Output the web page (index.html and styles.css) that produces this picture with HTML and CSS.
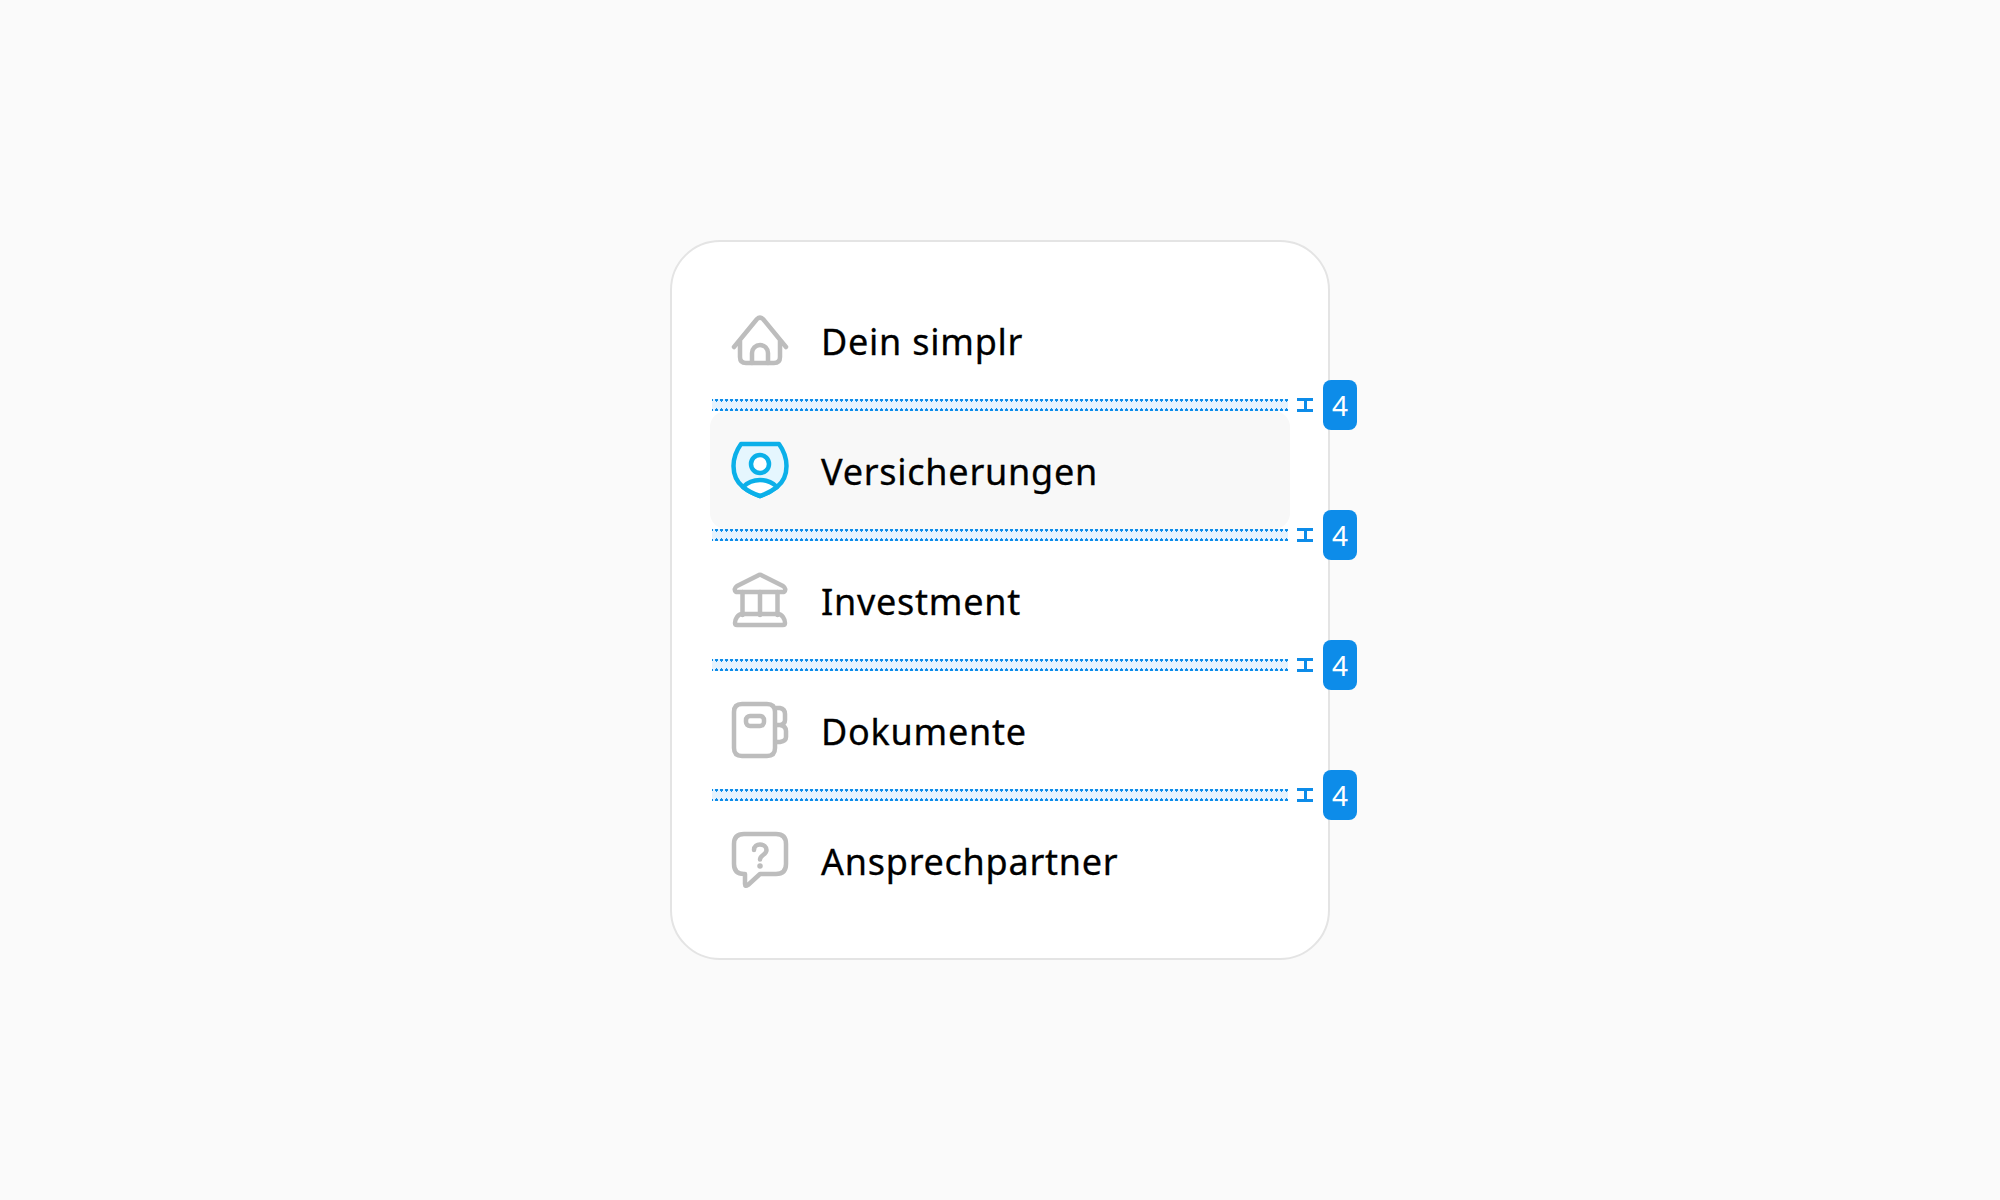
FILE: index.html
```html
<!DOCTYPE html>
<html lang="de">
<head>
    <meta charset="UTF-8">
    <title>Navigation Abstände</title>
    <link rel="stylesheet" href="styles.css">
</head>
<body>

    <div class="card">
        <div class="nav-item">
            <svg class="icon" viewBox="0 0 60 60">
                <path d="M4 37 L27 9 Q30 6 33 9 L56 37"/>
                <path d="M10 31 V47 Q10 53 16 53 H44 Q50 53 50 47 V31"/>
                <path d="M22 53 V43 A8 8 0 0 1 38 43 V53"/>
            </svg>
            <span class="label">Dein simplr</span>
        </div>

        <div class="gap"><span class="gap-mark"></span><span class="badge">4</span></div>

        <div class="nav-item active">
            <svg class="icon" viewBox="0 0 60 60">
                <path class="shield" d="M11 4 H49 C54 11 56.5 19 56.5 26 C56.5 36 52 43 47 47 C42 51 36 54 30 56 C24 54 18 51 13 47 C8 43 3.5 36 3.5 26 C3.5 19 6 11 11 4 Z"/>
                <path class="cutout" d="M13 47 C18 42 24 40 30 40 C36 40 42 42 47 47 C42 51 36 54 30 56 C24 54 18 51 13 47 Z"/>
                <circle class="cutout" cx="30" cy="24" r="9"/>
            </svg>
            <span class="label">Versicherungen</span>
        </div>

        <div class="gap"><span class="gap-mark"></span><span class="badge">4</span></div>

        <div class="nav-item">
            <svg class="icon" viewBox="0 0 60 60">
                <path d="M28 5.5 Q30 4 32 5.5 L53 16 Q57 19 54 22 H6 Q3 19 7 16 Z"/>
                <path d="M12.5 22 V45 M30 22 V45 M47.5 22 V45"/>
                <path d="M12 44 H48 C52 44 55 49 55 53 Q55 55 53 55 H7 Q5 55 5 53 C5 49 8 44 12 44 Z"/>
            </svg>
            <span class="label">Investment</span>
        </div>

        <div class="gap"><span class="gap-mark"></span><span class="badge">4</span></div>

        <div class="nav-item">
            <svg class="icon" viewBox="0 0 60 60">
                <path d="M12 4 H37 Q45 4 45 12 V48 Q45 56 37 56 H12 Q4 56 4 48 V12 Q4 4 12 4 Z"/>
                <rect x="16" y="16" width="18" height="10" rx="4"/>
                <path d="M46 8 H50 Q55 9 55 14 V20 Q55 24 50 25 H46 M50 25 Q56 26 56 31 V37 Q56 41 50 42 H46"/>
            </svg>
            <span class="label">Dokumente</span>
        </div>

        <div class="gap"><span class="gap-mark"></span><span class="badge">4</span></div>

        <div class="nav-item">
            <svg class="icon" viewBox="0 0 60 60">
                <path d="M14 4 H46 Q56 4 56 14 V34 Q56 44 46 44 H30 L18 55 Q15 57 15 54 V44 H14 Q4 44 4 34 V14 Q4 4 14 4 Z"/>
                <path d="M24 20 C24 16 27 14.5 30 14.5 C34 14.5 36.5 17 36.5 20 C36.5 25 30 25 30 29.5"/>
                <path class="dot" d="M30 36 V36.1"/>
            </svg>
            <span class="label">Ansprechpartner</span>
        </div>
    </div>

</body>
</html>
```

FILE: styles.css
```css
body {
    background-color: #fafafa;
    margin: 0;
    height: 1200px;
    display: flex;
    justify-content: center;
    align-items: center;
    font-family: "Noto Sans", sans-serif;
}

.card {
    box-sizing: border-box;
    width: 660px;
    height: 720px;
    background-color: #ffffff;
    border: 2px solid #e4e4e4;
    border-radius: 50px;
    padding: 39px 38px;
}

.nav-item {
    height: 118px;
    display: flex;
    align-items: center;
    gap: 31px;
    padding-left: 20px;
    border-radius: 16px;
    box-sizing: border-box;
}

.nav-item.active {
    background-color: #f8f8f8;
}

.icon {
    width: 60px;
    height: 60px;
    flex-shrink: 0;
    fill: none;
    stroke: #bdbdbd;
    stroke-width: 4.5;
    stroke-linecap: round;
    stroke-linejoin: round;
}

.active .icon {
    stroke: #0bb0e9;
}

.shield {
    fill: #e5f6fe;
}

.cutout {
    fill: #ffffff;
}

.dot {
    stroke-width: 5.5;
}

.label {
    font-size: 36px;
    letter-spacing: 0.75px;
    padding-top: 2px;
    color: #000000;
    -webkit-text-stroke: 0.3px #000000;
}

/* Abstand zwischen den Zeilen */
.gap {
    height: 12px;
    position: relative;
    background-color: #e6f3fe;
    background-image:
        radial-gradient(circle, #0d8ce9 1.5px, transparent 1.8px),
        radial-gradient(circle, #0d8ce9 1.5px, transparent 1.8px);
    background-size: 5px 4px;
    background-repeat: repeat-x;
    background-position: 2px -1px, 2px 9px;
    margin: 0 2px;
}

.gap-mark {
    position: absolute;
    left: 585px;
    top: -1px;
    width: 16px;
    height: 14px;
    box-sizing: border-box;
    border-top: 3px solid #0d8ce9;
    border-bottom: 3px solid #0d8ce9;
    background: linear-gradient(#0d8ce9, #0d8ce9) center / 3px 100% no-repeat;
}

.badge {
    position: absolute;
    left: 611px;
    top: -19px;
    width: 34px;
    height: 50px;
    border-radius: 8px;
    background-color: #0d8ce9;
    color: #ffffff;
    font-size: 28px;
    display: flex;
    justify-content: center;
    align-items: center;
}
```
